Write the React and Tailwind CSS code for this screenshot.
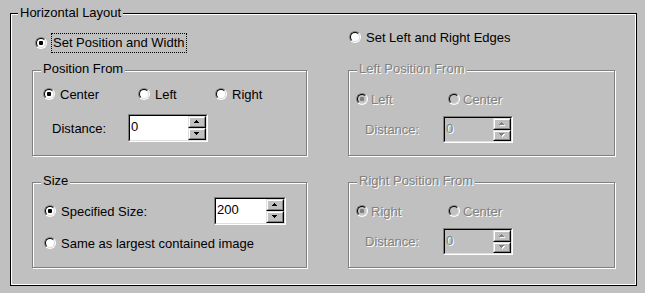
const Radio = ({ checked, disabled, className = '' }) => (
  <span
    className={`flex h-[12px] w-[12px] shrink-0 rounded-full border border-t-[#808080] border-l-[#808080] border-b-white border-r-white ${className}`}
  >
    <span
      className={`flex flex-1 items-center justify-center rounded-full border border-t-black border-l-black border-b-[#dfdfdf] border-r-[#dfdfdf] ${
        disabled ? 'bg-[#c0c0c0]' : 'bg-white'
      }`}
    >
      {checked && (
        <span className={`h-[4px] w-[4px] rounded-[1px] ${disabled ? 'bg-[#808080]' : 'bg-black'}`} />
      )}
    </span>
  </span>
);

const Arrow = ({ up, disabled }) => {
  const rows = up
    ? [[2, 0, 1], [1, 1, 3], [0, 2, 5]]
    : [[0, 0, 5], [1, 1, 3], [2, 2, 1]];
  return (
    <svg width="6" height="4" viewBox="0 0 6 4" shapeRendering="crispEdges">
      {disabled &&
        rows.map(([x, y, w]) => (
          <rect key={'s' + y} x={x + 1} y={y + 1} width={w} height={1} fill="#fff" />
        ))}
      {rows.map(([x, y, w]) => (
        <rect key={y} x={x} y={y} width={w} height={1} fill={disabled ? '#808080' : '#000'} />
      ))}
    </svg>
  );
};

const SpinButton = ({ up, disabled }) => (
  <div className="flex flex-1 border border-t-[#dfdfdf] border-l-[#dfdfdf] border-b-black border-r-black">
    <div className="flex flex-1 items-center justify-center border border-t-white border-l-white border-b-[#808080] border-r-[#808080] bg-[#c0c0c0]">
      <Arrow up={up} disabled={disabled} />
    </div>
  </div>
);

const SpinBox = ({ value, disabled, size }) => (
  <div className={`flex border border-t-[#808080] border-l-[#808080] border-b-white border-r-white ${size}`}>
    <div
      className={`flex flex-1 border border-t-black border-l-black border-b-[#dfdfdf] border-r-[#dfdfdf] ${
        disabled ? 'bg-[#c0c0c0]' : 'bg-white'
      }`}
    >
      <span
        className={`flex-1 pl-[1px] pt-[3px] ${
          disabled ? 'text-[#808080] [text-shadow:1px_1px_0_#fff]' : ''
        }`}
      >
        {value}
      </span>
      <div className="flex w-[18px] flex-col">
        <SpinButton up disabled={disabled} />
        <SpinButton disabled={disabled} />
      </div>
    </div>
  </div>
);

const GroupBox = ({ title, disabled, className = '', children }) => (
  <div
    className={`relative h-[86px] border border-[#808080] shadow-[inset_1px_1px_0_#fff,1px_1px_0_#fff] ${className}`}
  >
    <span
      className={`absolute left-[8px] top-[-10px] bg-[#c0c0c0] px-[2px] ${
        disabled ? 'text-[#808080] [text-shadow:1px_1px_0_#fff]' : ''
      }`}
    >
      {title}
    </span>
    {children}
  </div>
);

const dim = 'text-[#808080] [text-shadow:1px_1px_0_#fff]';

const DisabledEdge = ({ title, first, second, className = '' }) => (
  <GroupBox title={title} disabled className={`w-[267px] pl-[7px] pt-[22px] ${className}`}>
    <div className="flex h-[12px] items-center">
      <div className="flex w-[92px] items-center">
        <Radio checked disabled />
        <span className={`ml-[3px] ${dim}`}>{first}</span>
      </div>
      <div className="flex items-center">
        <Radio disabled />
        <span className={`ml-[3px] ${dim}`}>{second}</span>
      </div>
    </div>
    <div className="mt-[11px] flex h-[27px] items-center">
      <span className={`w-[87px] pl-[9px] ${dim}`}>Distance:</span>
      <SpinBox value="0" disabled size="w-[70px] h-[27px]" />
    </div>
  </GroupBox>
);

export default function App() {
  return (
    <div className="h-[293px] w-[645px] bg-[#c0c0c0] pl-[10px] pt-[13px] font-['Liberation_Sans',Arial,sans-serif] text-[13px] leading-[15px] text-black">
      <div className="relative flex h-[273px] w-[627px] border border-black pl-[21px] shadow-[inset_1px_1px_0_#fff,inset_-1px_-1px_0_#fff]">
        <span className="absolute left-[7px] top-[-9px] bg-[#c0c0c0] px-[2px]">Horizontal Layout</span>

        {/* left column */}
        <div className="flex w-[275px] flex-col">
          <div className="h-[56px] pt-[19px]">
            <div className="flex h-[20px] items-center">
              <Radio checked className="ml-[3px]" />
              <span className="ml-[4px] border border-dotted border-black px-[1px] leading-[18px]">
                Set Position and Width
              </span>
            </div>
          </div>

          <GroupBox title="Position From" className="w-[275px] pl-[10px] pt-[17px]">
            <div className="flex h-[12px] items-center">
              <div className="flex w-[95px] items-center">
                <Radio checked />
                <span className="ml-[5px]">Center</span>
              </div>
              <div className="flex w-[77px] items-center">
                <Radio />
                <span className="ml-[5px]">Left</span>
              </div>
              <div className="flex items-center">
                <Radio />
                <span className="ml-[5px]">Right</span>
              </div>
            </div>
            <div className="mt-[14px] flex h-[28px] items-center">
              <span className="w-[85px] pl-[9px]">Distance:</span>
              <SpinBox value="0" size="w-[80px] h-[28px]" />
            </div>
          </GroupBox>

          <GroupBox title="Size" className="mt-[26px] w-[275px] pl-[11px] pt-[14px]">
            <div className="flex h-[28px] items-center">
              <div className="flex w-[170px] items-center">
                <Radio checked />
                <span className="ml-[5px]">Specified Size:</span>
              </div>
              <SpinBox value="200" size="w-[72px] h-[28px]" />
            </div>
            <div className="mt-[12px] flex h-[12px] items-center">
              <Radio />
              <span className="ml-[5px]">Same as largest contained image</span>
            </div>
          </GroupBox>
        </div>

        {/* right column */}
        <div className="ml-[41px] flex w-[267px] flex-col">
          <div className="h-[56px] pt-[17px]">
            <div className="flex h-[12px] items-center">
              <Radio className="ml-[1px]" />
              <span className="ml-[5px]">Set Left and Right Edges</span>
            </div>
          </div>
          <DisabledEdge title="Left Position From" first="Left" second="Center" />
          <DisabledEdge title="Right Position From" first="Right" second="Center" className="mt-[26px]" />
        </div>
      </div>
    </div>
  );
}
